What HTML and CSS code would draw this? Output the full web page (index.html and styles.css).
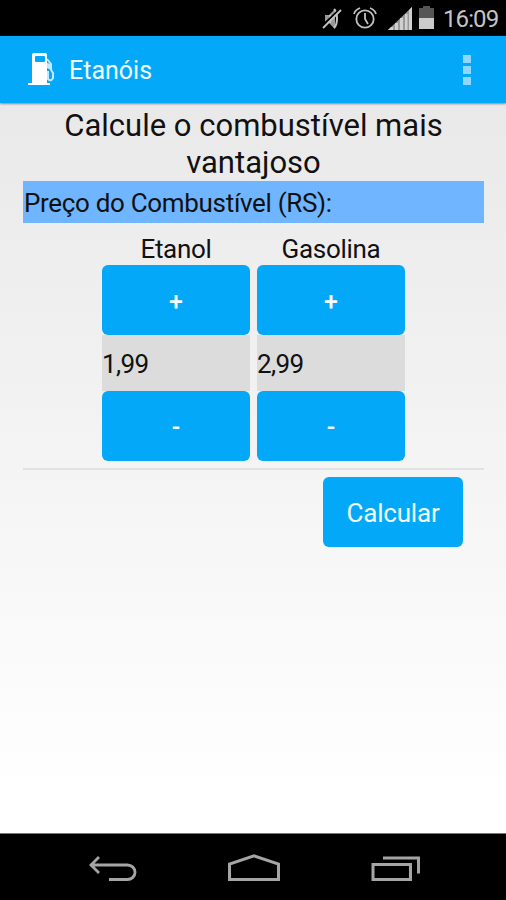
FILE: index.html
```html
<!DOCTYPE html>
<html lang="pt-BR">
<head>
<meta charset="utf-8">
<title>Etanóis</title>
<link rel="stylesheet" href="styles.css">
</head>
<body>
<div class="status">
  <svg class="mute" width="20" height="24" viewBox="0 0 20 24"><path d="M3 9h4l6-6v20l-6-6H3z" fill="#999"/><path d="M12 3c4 4 4 15 0 19M8 9v8" stroke="#c4c4c4" stroke-width="2" fill="none"/><path d="M0 20L18 3" stroke="#000" stroke-width="2"/><path d="M1 22L19 4" stroke="#c4c4c4" stroke-width="1.8"/></svg>
  <svg class="alarm" width="24" height="24" viewBox="0 0 24 24" fill="none" stroke="#c0c0c0" stroke-width="1.8"><circle cx="12" cy="13" r="8.700"/><path d="M12 7v6l3 5M1 8q1-4 6-6M23 8q-1-4-6-6"/></svg>
  <svg class="signal" width="25" height="24" viewBox="0 0 25 24"><path d="M0 24L24 1v23z" fill="#999"/><path d="M3 21h2v3H0zM7 17h3v7H7zM12 12h3v12h-3zM17 8h2.500v16H17zM21 4l3-3v23h-3z" fill="#d0d0d0"/></svg>
  <svg class="battery" width="15" height="23" viewBox="0 0 15 23"><path d="M0 2h4V0h7v2h4v10H0z" fill="#555"/><path d="M0 12h15v11H0z" fill="#cbcbcb"/></svg>
  <span class="time">16:09</span>
</div>
<header class="bar">
  <svg class="pump" width="28" height="34" viewBox="0 0 28 34"><path fill="#fff" fill-rule="evenodd" d="M4 3q0-2 2-2h11q2 0 2 2v28h3v2H0v-2h4zM8 4q-1 0-1 1v4q0 1 1 1h8q1 0 1-1V5q0-1-1-1z"/><path d="M19 7l4 5v5q0 2 2 4v5q-2 4-5 1v-8" fill="none" stroke="#c5e9ff" stroke-width="2"/><path d="M19 11l4 1v6l-4-2z" fill="#c5e9ff"/></svg>
  <h1 class="app">Etanóis</h1>
  <div class="menu"><i></i><i></i><i></i></div>
</header>
<main class="content">
  <h2 class="title">Calcule o combustível mais vantajoso</h2>
  <div class="label"><span>Preço do Combustível (RS):</span></div>
  <div class="prices">
    <div class="column">
      <span class="fuel">Etanol</span>
      <button class="button">+</button>
      <div class="value">1,99</div>
      <button class="button">-</button>
    </div>
    <div class="column">
      <span class="fuel">Gasolina</span>
      <button class="button">+</button>
      <div class="value">2,99</div>
      <button class="button">-</button>
    </div>
  </div>
  <div class="divider"></div>
  <button class="button calc">Calcular</button>
</main>
<nav class="nav">
  <svg width="48" height="28" viewBox="0 0 48 28" fill="none" stroke="#a5a5a5" stroke-width="2.800"><path d="M2 11h36.500a7.500 7.200 0 0 1 0 14.500H20M10 3L2 11l8 8"/></svg>
  <svg width="52" height="28" viewBox="0 0 52 28" fill="none" stroke="#a5a5a5" stroke-width="3"><path d="M1.500 25.500V10L26 1.800 50.500 10v15.500z"/></svg>
  <svg width="50" height="28" viewBox="0 0 50 28" fill="none" stroke="#a5a5a5" stroke-width="3"><path d="M2 10.500h37.500v15H2zM12 4h35.500v15.500"/></svg>
</nav>
</body>
</html>
```
FILE: styles.css
```css
* { box-sizing: border-box; }
body {
  margin: 0;
  width: 506px;
  height: 900px;
  display: flex;
  flex-direction: column;
  overflow: hidden;
  background: #fff;
  color: #111;
  font-family: Roboto, "Liberation Sans", sans-serif;
}
svg { display: block; flex: none; }
.status {
  height: 36px;
  flex: none;
  display: flex;
  align-items: flex-start;
  padding: 6px 8px 0 0;
  justify-content: flex-end;
  background: #000;
}
.mute { margin-right: 11px; }
.alarm { margin-right: 11px; }
.signal { margin-right: 6px; }
.battery { margin-right: 9px; }
.time {
  width: 55px;
  font-size: 24px;
  line-height: 26px;
  letter-spacing: -0.9px;
  color: #c4c4c4;
  white-space: nowrap;
}
.bar {
  height: 67px;
  flex: none;
  display: flex;
  align-items: center;
  padding: 0 35px 0 28px;
  background: #03a9f8;
  box-shadow: 0 1px 2px #888;
  z-index: 1;
}
.pump { margin-top: -2px; }
.app {
  margin: 2px auto 0 13px;
  font-size: 25px;
  font-weight: 400;
  color: #f4fbff;
}
.menu { display: flex; flex-direction: column; gap: 3px; }
.menu i { width: 8px; height: 8px; background: #8fd7ff; }
.content {
  flex: 1;
  display: flex;
  flex-direction: column;
  padding: 4px 22px 0 23px;
  background: linear-gradient(#e9e9e9, #f3f3f3 45%, #fff 95%);
}
.title {
  margin: 0;
  height: 74px;
  font-size: 31px;
  line-height: 37px;
  font-weight: 400;
  text-align: center;
}
.label {
  height: 42px;
  padding: 1px 0 0 1px;
  line-height: 42px;
  font-size: 26px;
  letter-spacing: -0.32px;
  background: #6fb5ff;
}
.prices { display: flex; justify-content: center; gap: 7px; }
.column { width: 148px; display: flex; flex-direction: column; }
.fuel {
  height: 42px;
  padding-top: 10px;
  line-height: 32px;
  font-size: 26px;
  letter-spacing: -0.3px;
  text-align: center;
}
.button {
  height: 70px;
  padding: 3px 0 0;
  border: 0;
  border-radius: 6px;
  background: #03a9f8;
  color: #f4fbff;
  font: 500 25px/67px Roboto, "Liberation Sans", sans-serif;
}
.value {
  height: 56px;
  line-height: 59px;
  font-size: 26px;
  letter-spacing: -0.6px;
  background: #dcdcdc;
}
.divider { height: 2px; margin-top: 7px; background: #e1e1e1; }
.calc {
  width: 140px;
  margin: 7px 21px 0 0;
  align-self: flex-end;
  font-weight: 400;
  font-size: 26px;
  letter-spacing: -0.2px;
}
.nav {
  height: 67px;
  flex: none;
  display: flex;
  align-items: center;
  justify-content: space-between;
  padding: 2px 85px 0 89px;
  background: #000;
  border-top: 1px solid #777;
}
```
